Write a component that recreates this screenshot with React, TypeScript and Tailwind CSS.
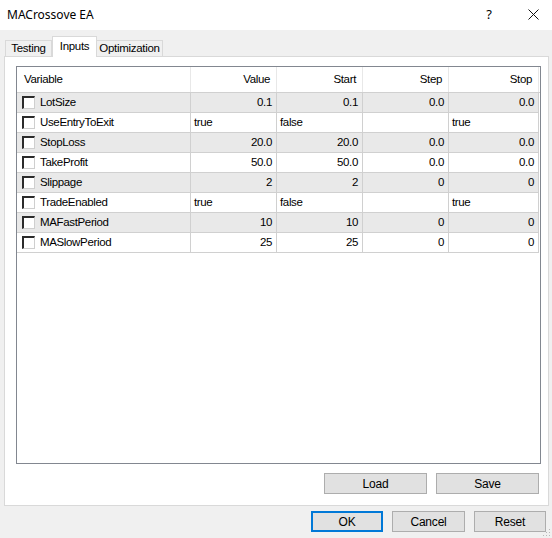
import React from "react";

const rows = [
  { name: "LotSize", v: "0.1", s: "0.1", st: "0.0", sp: "0.0", bool: false },
  { name: "UseEntryToExit", v: "true", s: "false", st: "", sp: "true", bool: true },
  { name: "StopLoss", v: "20.0", s: "20.0", st: "0.0", sp: "0.0", bool: false },
  { name: "TakeProfit", v: "50.0", s: "50.0", st: "0.0", sp: "0.0", bool: false },
  { name: "Slippage", v: "2", s: "2", st: "0", sp: "0", bool: false },
  { name: "TradeEnabled", v: "true", s: "false", st: "", sp: "true", bool: true },
  { name: "MAFastPeriod", v: "10", s: "10", st: "0", sp: "0", bool: false },
  { name: "MASlowPeriod", v: "25", s: "25", st: "0", sp: "0", bool: false },
];

function Cell({ w, text, left, last }: { w: string; text: string; left?: boolean; last?: boolean }) {
  return (
    <div
      className={`${w} h-full flex items-center ${left ? "justify-start pl-[3px]" : "justify-end pr-[4px]"} ${
        last ? "" : "border-r border-[#d0d0d0]"
      }`}
    >
      {text}
    </div>
  );
}

function Checkbox() {
  return (
    <div className="w-[13px] h-[13px] bg-white border-t-2 border-l-2 border-t-[#2b2b2b] border-l-[#2b2b2b] border-r border-b border-r-[#cfcfcf] border-b-[#cfcfcf]" />
  );
}

function Btn({ label, w, primary }: { label: string; w: string; primary?: boolean }) {
  return (
    <div
      className={`${w} h-[21px] flex items-center justify-center bg-[#e1e1e1] text-[12px] text-black ${
        primary ? "border-2 border-[#0078d7]" : "border border-[#adadad]"
      }`}
      style={{ fontFamily: "'Liberation Sans', Arial, sans-serif", letterSpacing: "-0.2px" }}
    >
      {label}
    </div>
  );
}

export default function App() {
  const ui = { fontFamily: "'Noto Sans', 'Liberation Sans', sans-serif" };
  const tbl = { fontFamily: "'Liberation Sans', Arial, sans-serif", letterSpacing: "-0.35px" };
  return (
    <div className="w-[552px] h-[538px] bg-[#f0f0f0] flex flex-col relative overflow-hidden" style={ui}>
      {/* title bar */}
      <div className="h-[30px] bg-white flex items-center pl-[7px] pr-[13px]">
        <span className="text-[12px] text-black">MACrossove EA</span>
        <span className="ml-auto text-[13px] text-black mr-[36px]">?</span>
        <svg width="11" height="11" viewBox="0 0 11 11" className="mb-[1px]">
          <path d="M0.5 0.5 L10.5 10.5 M10.5 0.5 L0.5 10.5" stroke="#111" strokeWidth="1" />
        </svg>
      </div>

      <div className="flex flex-col pl-[4px] pr-[3px]">
        {/* tabs */}
        <div className="mt-[6px] h-[20px] flex items-end pl-[1px] text-[11.5px] text-black" style={{ ...tbl, letterSpacing: "-0.3px" }}>
          <div className="w-[47px] h-[16px] border border-b-0 border-[#d9d9d9] bg-[#f0f0f0] flex items-center justify-center">
            Testing
          </div>
          <div className="w-[45px] h-[21px] -mb-[1px] relative z-10 border border-b-0 border-[#d9d9d9] bg-white flex items-start pt-[1px] justify-center">
            Inputs
          </div>
          <div className="w-[66px] h-[16px] border border-b-0 border-l-0 border-[#d9d9d9] bg-[#f0f0f0] flex items-center justify-center">
            Optimization
          </div>
        </div>

        {/* panel */}
        <div className="h-[450px] border border-[#d9d9d9] bg-white flex flex-col pl-[11px] pr-[7px] pt-[9px]">
          <div className="h-[398px] border border-[#828790] bg-white text-[11.5px] text-black" style={tbl}>
            {/* header */}
            <div className="h-[26px] flex border-b border-[#d0d0d0]">
              <div className="w-[174px] h-full flex items-center pl-[7px] border-r border-[#e8e8e8]">Variable</div>
              <div className="w-[86px] h-full flex items-center justify-end pr-[6px] border-r border-[#e8e8e8]">Value</div>
              <div className="w-[86px] h-full flex items-center justify-end pr-[6px] border-r border-[#e8e8e8]">Start</div>
              <div className="w-[86px] h-full flex items-center justify-end pr-[6px] border-r border-[#e8e8e8]">Step</div>
              <div className="w-[90px] h-full flex items-center justify-end pr-[6px] border-r border-[#e8e8e8]">Stop</div>
            </div>
            {rows.map((r, i) => (
              <div
                key={r.name}
                className={`h-[20px] w-[522px] flex border-b border-[#d0d0d0] ${i % 2 === 0 ? "bg-[#e9e9e9]" : "bg-white"}`}
              >
                <div className="w-[174px] h-full flex items-center pl-[5px] gap-[5px] border-r border-[#d0d0d0]">
                  <Checkbox />
                  <span>{r.name}</span>
                </div>
                <Cell w="w-[86px]" text={r.v} left={r.bool} />
                <Cell w="w-[86px]" text={r.s} left={r.bool} />
                <Cell w="w-[86px]" text={r.st} left={r.bool} />
                <Cell w="w-[90px]" text={r.sp} left={r.bool} />
              </div>
            ))}
          </div>
          <div className="mt-[9px] flex justify-end gap-[9px] pr-[2px]">
            <Btn label="Load" w="w-[103px]" />
            <Btn label="Save" w="w-[103px]" />
          </div>
        </div>

        {/* bottom buttons */}
        <div className="mt-[5px] flex justify-end gap-[9px] pr-[3px]">
          <Btn label="OK" w="w-[72px]" primary />
          <Btn label="Cancel" w="w-[73px]" />
          <Btn label="Reset" w="w-[72px]" />
        </div>
      </div>

      {/* resize grip */}
      <svg width="10" height="10" viewBox="0 0 10 10" className="absolute right-[1px] bottom-[1px]">
        {[
          [8, 2],
          [8, 5],
          [5, 5],
          [8, 8],
          [5, 8],
          [2, 8],
        ].map(([x, y], i) => (
          <rect key={i} x={x} y={y} width="1" height="1" fill="#b8b8b8" />
        ))}
      </svg>
    </div>
  );
}
